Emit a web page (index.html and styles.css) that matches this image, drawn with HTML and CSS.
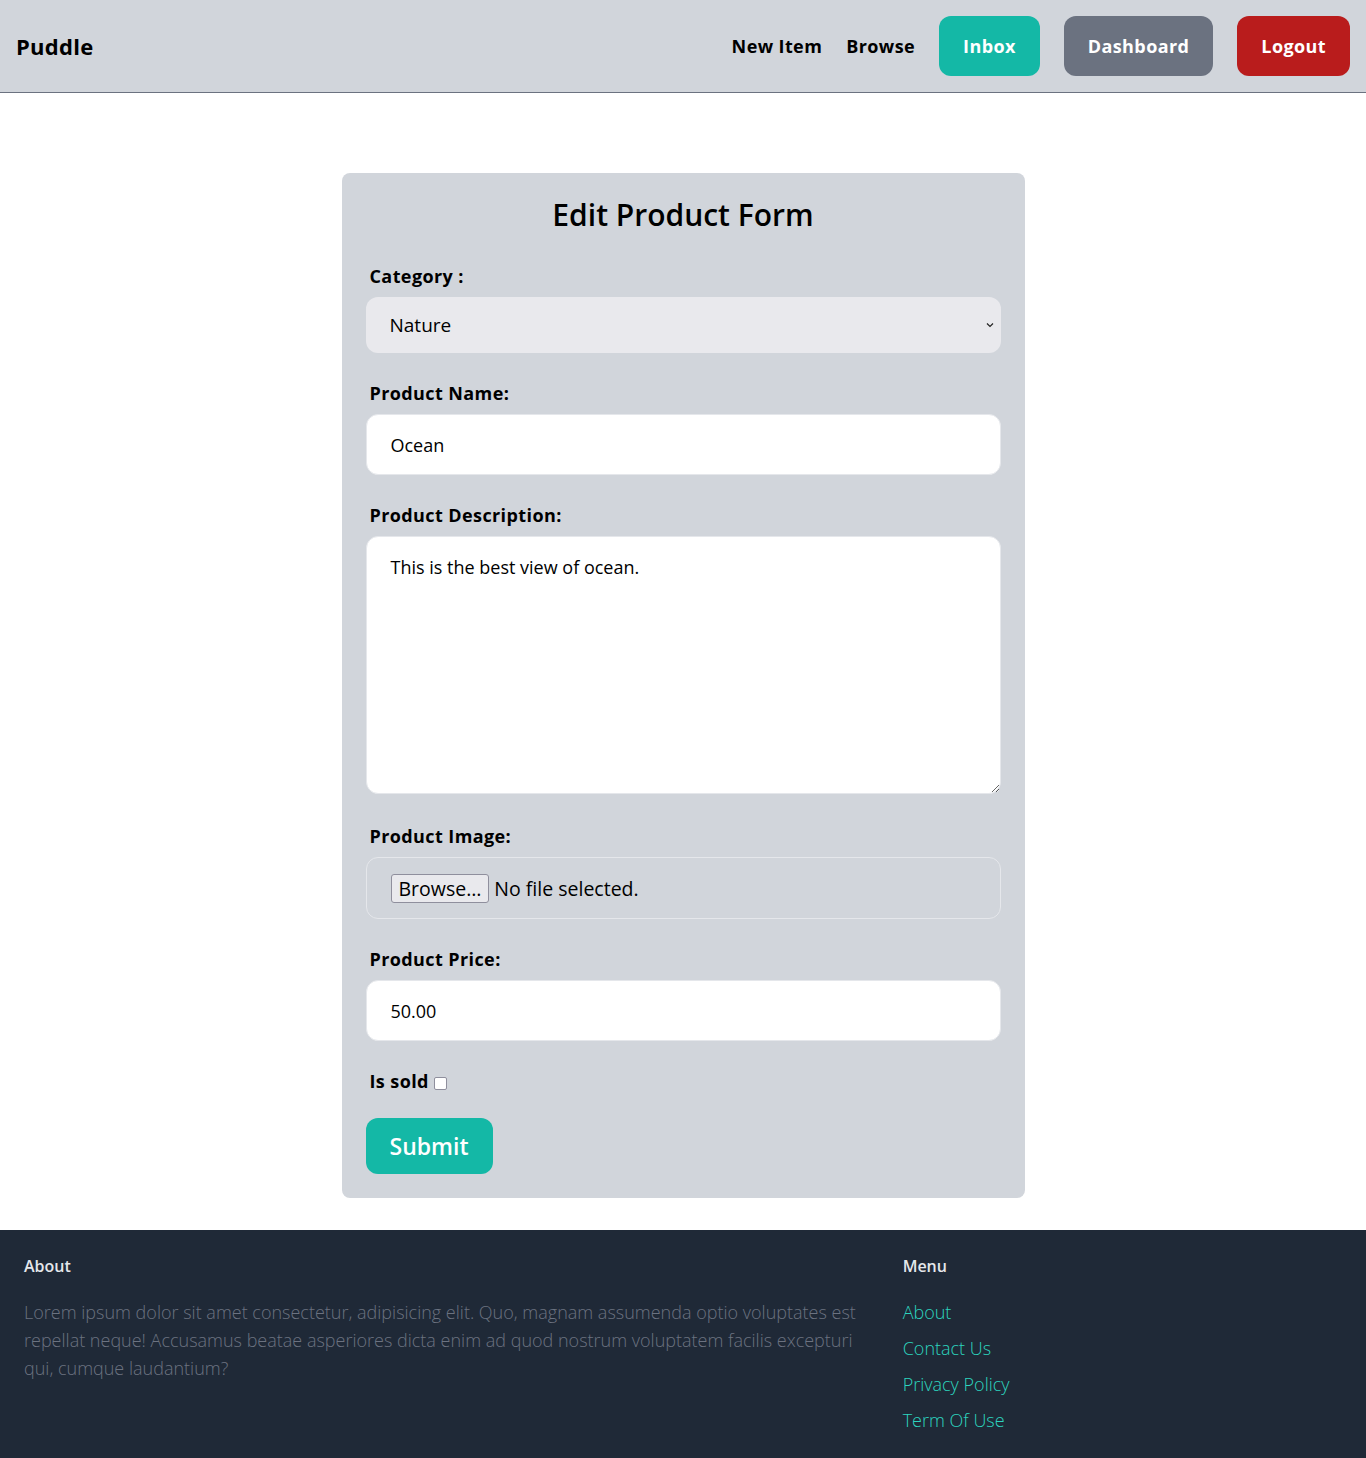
FILE: index.html
```html
<!DOCTYPE html>
<html lang="en">
<head>
<meta charset="utf-8">
<title>Edit Product Form</title>
<link rel="stylesheet" href="styles.css">
</head>
<body>
<nav class="nav">
  <a class="logo" href="#">Puddle</a>
  <div class="nav-links">
    <a class="nav-link" href="#">New Item</a>
    <a class="nav-link" href="#">Browse</a>
    <a class="btn btn-teal" href="#">Inbox</a>
    <a class="btn btn-gray" href="#">Dashboard</a>
    <a class="btn btn-red" href="#">Logout</a>
  </div>
</nav>

<main class="main">
  <form class="card">
    <h1 class="card-title">Edit Product Form</h1>

    <div class="field">
      <label class="label">Category :</label>
      <div class="select-wrap">
        <select class="select">
          <option>Nature</option>
        </select>
        <svg class="chev" width="10" height="6" viewBox="0 0 10 6"><path d="M2 1.5 L5 4.5 L8 1.5" fill="none" stroke="#222" stroke-width="1.2"/></svg>
      </div>
    </div>

    <div class="field">
      <label class="label">Product Name:</label>
      <input class="input" type="text" value="Ocean">
    </div>

    <div class="field field-desc">
      <label class="label">Product Description:</label>
      <textarea class="input textarea">This is the best view of ocean.</textarea>
    </div>

    <div class="field">
      <label class="label">Product Image:</label>
      <div class="file">
        <span class="file-btn">Browse…</span><span class="file-text">No file selected.</span>
      </div>
    </div>

    <div class="field">
      <label class="label">Product Price:</label>
      <input class="input" type="text" value="50.00">
    </div>

    <div class="field field-check">
      <label class="label label-inline">Is sold</label><span class="checkbox"></span>
    </div>

    <button class="submit" type="button">Submit</button>
  </form>
</main>

<footer class="footer">
  <div class="footer-about">
    <h3 class="footer-title">About</h3>
    <p class="footer-text">Lorem ipsum dolor sit amet consectetur, adipisicing elit. Quo, magnam assumenda optio voluptates est repellat neque! Accusamus beatae asperiores dicta enim ad quod nostrum voluptatem facilis excepturi qui, cumque laudantium?</p>
  </div>
  <div class="footer-menu">
    <h3 class="footer-title">Menu</h3>
    <ul class="footer-list">
      <li><a href="#">About</a></li>
      <li><a href="#">Contact Us</a></li>
      <li><a href="#">Privacy Policy</a></li>
      <li><a href="#">Term Of Use</a></li>
    </ul>
  </div>
</footer>
</body>
</html>
```

FILE: styles.css
```css
* { box-sizing: border-box; }
html, body { margin: 0; padding: 0; }
body {
  font-family: "Open Sans", "Noto Sans", sans-serif;
  color: #000;
  background: #fff;
}
a { text-decoration: none; color: inherit; }

.nav {
  display: flex;
  justify-content: space-between;
  align-items: center;
  padding: 16px;
  background: #d1d5db;
  border-bottom: 1px solid #6b7280;
}
.logo { font-size: 22px; font-weight: 700; line-height: 32px; letter-spacing: 0.3px; }
.nav-links { display: flex; align-items: center; gap: 24px; }
.nav-link { font-size: 18px; font-weight: 700; line-height: 28px; letter-spacing: 0.4px; }
.btn {
  display: block;
  padding: 16px 24px;
  font-size: 18px;
  line-height: 28px;
  font-weight: 700;
  letter-spacing: 0.4px;
  color: #fff;
  border-radius: 12px;
}
.btn-teal { background: #14b8a6; }
.btn-gray { background: #6b7280; }
.btn-red { background: #b91c1c; }

.main { padding: 80px 0 32px; }
.card {
  width: 683px;
  margin: 0 auto;
  background: #d1d5db;
  border-radius: 8px;
  padding: 24px;
}
.card-title {
  margin: 0 0 29px;
  text-align: center;
  font-size: 30px;
  line-height: 36px;
  font-weight: 600;
}
.field { margin-bottom: 26px; }
.field-desc { margin-bottom: 28px; }
.label {
  display: block;
  margin: 0 0 7px 4px;
  font-size: 18px;
  line-height: 28px;
  font-weight: 700;
  letter-spacing: 0.4px;
}
.select-wrap { position: relative; }
.select {
  display: block;
  width: 100%;
  height: 56px;
  padding: 0 24px;
  border: 0;
  border-radius: 12px;
  background: #e9e9ed;
  font-family: inherit;
  font-size: 19px;
  color: #000;
  appearance: none;
  -webkit-appearance: none;
}
.chev { position: absolute; right: 6px; top: 25px; }
.input {
  display: block;
  width: 100%;
  height: 61px;
  padding: 16px 24px;
  border: 1px solid #e5e7eb;
  border-radius: 12px;
  background: #fff;
  font-family: inherit;
  font-size: 18px;
  line-height: 28px;
  color: #000;
}
.textarea { height: 258px; resize: vertical; }
.file {
  display: flex;
  align-items: center;
  height: 62px;
  padding: 0 24px;
  border: 1px solid #e5e7eb;
  border-radius: 12px;
  font-size: 19.5px;
}
.file-btn {
  display: inline-block;
  height: 29px;
  line-height: 27px;
  padding: 0 7px;
  background: #e9e9ed;
  border: 1px solid #8f8f9d;
  border-radius: 3px;
  margin-right: 5px;
}
.field-check { display: flex; align-items: center; margin-bottom: 23px; }
.label-inline { display: inline-block; margin: 0 5px 0 4px; }
.checkbox {
  display: inline-block;
  width: 13px;
  height: 13px;
  margin-top: 4px;
  border: 1px solid #8f8f9d;
  border-radius: 2px;
  background: #fff;
}
.submit {
  display: block;
  padding: 12px 24px;
  border: 0;
  border-radius: 12px;
  background: #14b8a6;
  color: #fff;
  font-family: inherit;
  font-size: 23px;
  line-height: 32px;
  font-weight: 600;
}

.footer {
  display: flex;
  padding: 24px;
  background: #1f2937;
}
.footer-about { width: 66.6667%; padding-right: 24px; }
.footer-menu { width: 33.3333%; }
.footer-title {
  margin: 0 0 20px;
  font-size: 16px;
  line-height: 24px;
  font-weight: 600;
  color: #e5e7eb;
}
.footer-text {
  margin: 0;
  font-size: 18px;
  line-height: 28px;
  font-weight: 300;
  color: #6b7280;
}
.footer-list {
  list-style: none;
  margin: 0;
  padding: 0;
  display: flex;
  flex-direction: column;
  gap: 8px;
}
.footer-list a {
  display: block;
  font-size: 18px;
  line-height: 28px;
  font-weight: 300;
  color: #2dd4bf;
}
```
